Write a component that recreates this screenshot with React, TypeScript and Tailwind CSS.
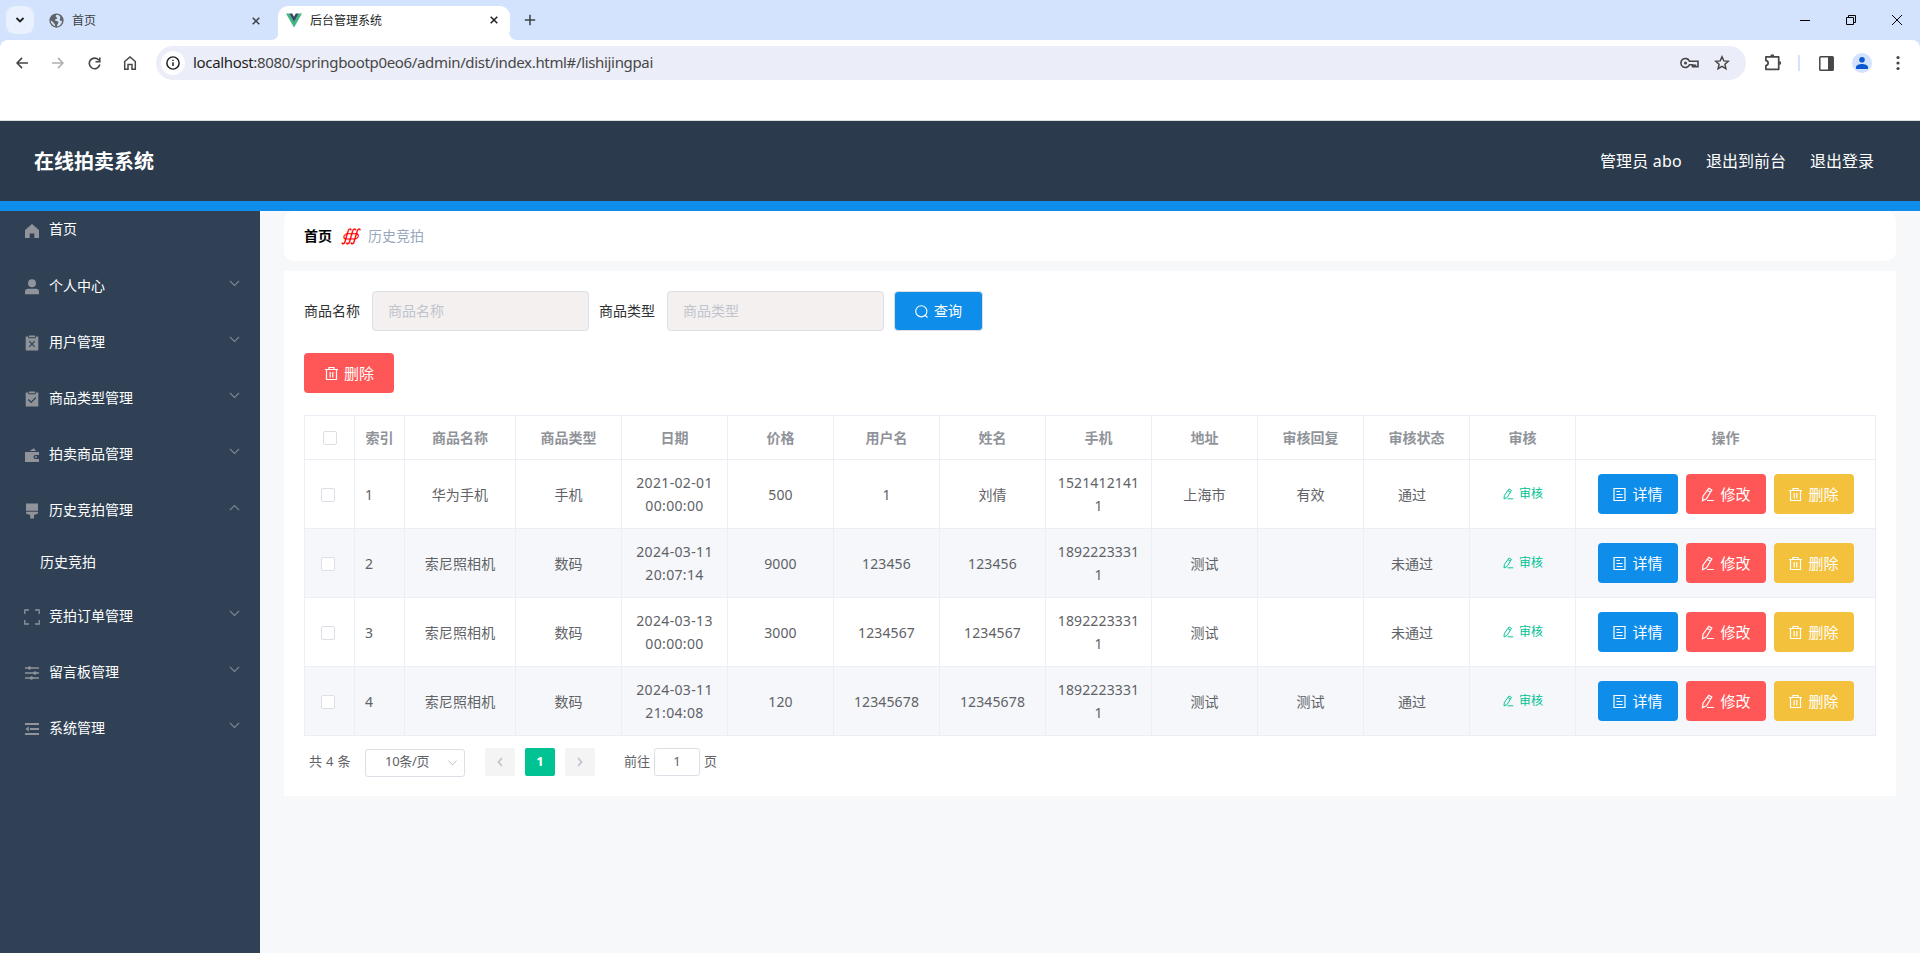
import { ReactNode } from "react";

const columns = ["商品名称", "商品类型", "日期", "价格", "用户名", "姓名", "手机", "地址", "审核回复", "审核状态", "审核"];

interface AuctionRow {
  id: number;
  cells: string[];
  status: string;
}

const rows: AuctionRow[] = [
  { id: 1, cells: ["华为手机", "手机", "2021-02-01 00:00:00", "500", "1", "刘倩", "15214121411", "上海市", "有效"], status: "通过" },
  { id: 2, cells: ["索尼照相机", "数码", "2024-03-11 20:07:14", "9000", "123456", "123456", "18922233311", "测试", ""], status: "未通过" },
  { id: 3, cells: ["索尼照相机", "数码", "2024-03-13 00:00:00", "3000", "1234567", "1234567", "18922233311", "测试", ""], status: "未通过" },
  { id: 4, cells: ["索尼照相机", "数码", "2024-03-11 21:04:08", "120", "12345678", "12345678", "18922233311", "测试", "测试"], status: "通过" },
];

function TabClose({ className }: { className: string }) {
  return (
    <svg className={`w-2 h-2 ${className}`} viewBox="0 0 8 8" stroke="currentColor" strokeWidth="1.5">
      <path d="M.7.7l6.6 6.6M7.3.7L.7 7.3" />
    </svg>
  );
}

// Tab strip
function BrowserTabs() {
  return (
    <div className="h-10 shrink-0 bg-[#d3e3fd] flex items-start text-[12px] text-[#3c4043]">
      <div className="w-7 h-7 mt-1.5 ml-1.5 rounded-[9px] bg-[#e9f0fe] flex items-center justify-center">
        <svg className="w-2.5 h-2.5" viewBox="0 0 10 10" fill="none" stroke="#202124" strokeWidth="1.8">
          <path d="M1.5 3l3.5 3.5L8.500 3" />
        </svg>
      </div>
      <div className="w-[237px] h-10 pl-[15px] pt-px flex items-center">
        <svg className="w-[15px] h-[15px] shrink-0" viewBox="0 0 16 16">
          <circle cx="8" cy="8" r="7.6" fill="#5f6368" />
          <path d="M9 1.800C7 2 6.500 3.500 8 4.500c1.500.8.5 2-1 2.200C5.500 7 6.500 8.500 8 8.500c2 0 2.500 1.800 1.500 3C8.500 12.500 8.500 14 9 14.300c3-.6 5-3.300 5-6.300-.8.8-2.500.5-2.500-.7 0-1.400 1-1.600.5-3C11.500 3 10.500 2 9 1.800zM1.800 8c.2 3 2 5.200 4.700 6 .3-1.500-.5-2-1.200-3C4.600 9.800 3.500 8.500 1.800 8z" fill="#d3e3fd" />
        </svg>
        <span className="ml-2">首页</span>
        <TabClose className="ml-auto mr-[11px]" />
      </div>
      <div className="w-2 h-2 mt-8 bg-white -mr-px">
        <div className="w-2 h-2 bg-[#d3e3fd] rounded-br-lg" />
      </div>
      <div className="w-[232px] h-[34px] mt-1.5 pl-2 pb-1.5 rounded-t-[10px] bg-white flex items-center text-[#1f1f1f]">
        <svg className="w-4 h-[15px] shrink-0" viewBox="0 0 16 15">
          <path d="M0 .5h3.200L8 8.500 12.800.5H16L8 14.500z" fill="#41b883" />
          <path d="M3.200.5h3L8 3.700 9.800.5h3L8 8.700z" fill="#34495e" />
        </svg>
        <span className="ml-2 mt-0.5">后台管理系统</span>
        <TabClose className="ml-auto mr-3" />
      </div>
      <div className="w-2 h-2 mt-8 bg-white -ml-px">
        <div className="w-2 h-2 bg-[#d3e3fd] rounded-bl-lg" />
      </div>
      <svg className="w-3 h-3 mt-[14px] ml-[7px]" viewBox="0 0 12 12" stroke="#3c4043" strokeWidth="1.5">
        <path d="M6 .8v10.400M.8 6h10.400" />
      </svg>
      <div className="ml-auto flex items-center h-10 text-black">
        <svg className="w-2.5 h-2.5 mr-9" viewBox="0 0 10 10" stroke="currentColor"><path d="M0 5.500h10" /></svg>
        <svg className="w-2.5 h-2.5 mr-9" viewBox="0 0 10 10" fill="none" stroke="currentColor"><path d="M.5 2.500h7v7h-7zM2.500 2.500v-2h7v7h-2" /></svg>
        <svg className="w-2.5 h-2.5 mr-[18px]" viewBox="0 0 10 10" stroke="currentColor"><path d="M0 0l10 10M10 0L0 10" /></svg>
      </div>
    </div>
  );
}

function AddressBar() {
  return (
    <div className="shrink-0 bg-[#d3e3fd]">
      <div className="h-[81px] bg-white rounded-t-lg border-b border-[#dcdfdc] flex items-start pt-1.5">
        <div className="w-[156px] h-[34px] flex items-center pl-4 text-[#474747]">
          <svg className="w-3 h-3" viewBox="0 0 12 12" fill="none" stroke="currentColor" strokeWidth="1.600"><path d="M12 6H1.300M6 .9L1.100 6 6 11.100" /></svg>
          <svg className="w-3 h-3 ml-6 text-[#b0b0b0]" viewBox="0 0 12 12" fill="none" stroke="currentColor" strokeWidth="1.600"><path d="M0 6h10.700M6 .9L10.900 6 6 11.100" /></svg>
          <svg className="w-[13px] h-[13px] ml-6" viewBox="0 0 13 13" fill="none" stroke="currentColor" strokeWidth="1.600"><path d="M11 3.400A5.300 5.300 0 1 0 11.800 7.500M11.800.5v4.200H7.500" /></svg>
          <svg className="w-3.5 h-3.5 ml-[22px]" viewBox="0 0 14 14" fill="none" stroke="currentColor" strokeWidth="1.500"><path d="M1.700 5.500L7 1l5.300 4.500v7.800H9V8.500H5v4.800H1.700z" /></svg>
        </div>
        <div className="w-[1590px] h-[34px] rounded-full bg-[#ebeef8] flex items-center pl-[5px] pr-4">
          <div className="w-6 h-6 rounded-full bg-white flex items-center justify-center">
            <svg className="w-3.5 h-3.5" viewBox="0 0 16 16" fill="none" stroke="#1f1f1f" strokeWidth="1.700"><circle cx="8" cy="8" r="7" /><path d="M8 7v4.500M8 4.200v1.600" /></svg>
          </div>
          <span className="ml-2 mb-px text-[15px] tracking-[-0.34px] text-[#474747]"><span className="text-[#1f1f1f]">localhost</span>:8080/springbootp0eo6/admin/dist/index.html#/lishijingpai</span>
          <svg className="w-[19px] h-3 ml-auto mr-[15px]" viewBox="0 0 19 12" fill="none" stroke="#474747" strokeWidth="1.600"><path d="M9.500 4.200A4.500 4.500 0 1 0 9.500 7.800h3v2h1.500v-1.500h1.500v1.500h2.500V4.200z" /><circle cx="5.500" cy="6" r="1.500" fill="#474747" stroke="none" /></svg>
          <svg className="w-4 h-4" viewBox="0 0 16 16" fill="none" stroke="#474747" strokeWidth="1.500"><path d="M8 1.800l1.800 4.100 4.500.4-3.400 3 1 4.400L8 11.400l-3.900 2.300 1-4.400-3.400-3 4.500-.4z" /></svg>
        </div>
        <div className="h-[34px] flex items-center text-[#474747]">
          <svg className="w-[18px] h-[18px] ml-[18px] mb-0.5" viewBox="0 0 18 18" fill="none" stroke="currentColor" strokeWidth="1.700">
            <path d="M1.900 3.800h12.800v12.500H1.900v-3.800c3-.4 3-4.500 0-4.900z" strokeLinejoin="round" />
            <path d="M6.300 3.200a2 2 0 0 1 4 0zM15.200 8a2 2 0 0 1 0 4z" fill="currentColor" stroke="none" />
          </svg>
          <div className="w-0.5 h-4 ml-4 bg-[#d3e3fd]" />
          <svg className="w-[15px] h-[15px] ml-[19px]" viewBox="0 0 15 15" fill="none" stroke="currentColor" strokeWidth="1.500">
            <rect x=".8" y=".8" width="13.400" height="13.400" rx=".8" />
            <path d="M9 1h5v13H9z" fill="currentColor" stroke="none" />
          </svg>
          <div className="w-5 h-5 ml-[18px] rounded-full bg-[#d3e3fd] flex items-center justify-center">
            <svg className="w-3 h-3" viewBox="0 0 12 12" fill="#0b57d0"><circle cx="6" cy="2.800" r="2.800" /><path d="M0 12v-1.800C0 8 3.500 7 6 7s6 1 6 3.200V12z" /></svg>
          </div>
          <svg className="w-1 h-4 ml-6" viewBox="0 0 4 16" fill="currentColor"><circle cx="2" cy="2.500" r="1.600" /><circle cx="2" cy="8" r="1.600" /><circle cx="2" cy="13.500" r="1.600" /></svg>
        </div>
      </div>
    </div>
  );
}

interface IconProps {
  children: ReactNode;
  className?: string;
}

function MenuIcon({ children, className = "" }: IconProps) {
  return (
    <svg className={`w-4 h-4 shrink-0 ${className}`} viewBox="0 0 16 16" fill="#909399">
      {children}
    </svg>
  );
}

const menus: { label: string; icon: ReactNode; child?: string }[] = [
  { label: "个人中心", icon: <><circle cx="8" cy="4.200" r="4" /><path d="M1 15.200v-2.400q0-3 3-3h8q3 0 3 3v2.400z" /></> },
  { label: "用户管理", icon: <><path d="M1.700 1.500h2.600v1.800h7.400V1.500h2.600V15.500H1.700zM5 .5h6v1.800H5z" /><path d="M5.300 6.200l5.400 5.600M10.700 6.200l-5.400 5.600" stroke="#304156" strokeWidth="1.200" /></> },
  { label: "商品类型管理", icon: <><path d="M1.700 1.500h2.600v1.800h7.400V1.500h2.600V15.500H1.700zM5 .5h6v1.800H5z" /><path d="M4.200 8.500l3 2.800 4.600-4.800" fill="none" stroke="#304156" strokeWidth="1.200" /></> },
  { label: "拍卖商品管理", icon: <><path d="M1 5h14v3h-3.500a2 2 0 0 0 0 4H15v3H1zM5.500 4L10 1.200 12 4z" /><circle cx="12" cy="10" r="1" /></> },
  { label: "历史竞拍管理", icon: <path d="M2 .5h12v7.300H2zM2 8.700h12v1.300q0 1-1 1l-3 1v3.500H6.200V12L3 11q-1 0-1-1z" />, child: "历史竞拍" },
  { label: "竞拍订单管理", icon: <path d="M.8 5V1H5M11 1h4.200v4M15.200 11v4H11M5 15H.8v-4" fill="none" stroke="#909399" strokeWidth="1.300" /> },
  { label: "留言板管理", icon: <><path d="M1 3h14M1 8h14M1 13h14" stroke="#909399" strokeWidth="1.300" /><circle cx="5.500" cy="3" r="1.700" /><circle cx="11" cy="8" r="1.700" /><circle cx="7.500" cy="13" r="1.700" /></> },
  { label: "系统管理", icon: <path d="M1 2h14v2H1zM6 7h9v2H6zM1 12h14v2H1zM1.500 8l3.300-2.400v4.800z" /> },
];

function Chevron({ open }: { open?: boolean }) {
  return (
    <svg className="w-[11px] h-[7px] ml-auto mb-[5px]" viewBox="0 0 11 7" fill="none" stroke="#7c8694" strokeWidth="1.100">
      <path d={open ? "M1 6l4.500-4.500L10 6" : "M1 1l4.500 4.500L10 1"} />
    </svg>
  );
}

function Sidebar() {
  return (
    <aside className="w-[260px] shrink-0 bg-[#304156] text-white text-sm">
      <div className="h-9 mb-[11px] pl-6 flex items-center">
        <MenuIcon className="mt-[3px]"><path d="M8 1l7 6v8h-4.700v-4.500H5.700V15H1V7z" /></MenuIcon>
        <span className="ml-[9px]">首页</span>
      </div>
      {menus.map((menu) => (
        <div key={menu.label}>
          <div className="h-14 pl-6 pr-5 flex items-center">
            <MenuIcon className="mt-px">{menu.icon}</MenuIcon>
            <span className="ml-[9px]">{menu.label}</span>
            <Chevron open={!!menu.child} />
          </div>
          {menu.child && <div className="h-[50px] pl-10 pb-0.5 flex items-center">{menu.child}</div>}
        </div>
      ))}
    </aside>
  );
}

function TrashIcon() {
  return (
    <svg className="w-[15px] h-[15px] shrink-0" viewBox="0 0 15 15" fill="none" stroke="currentColor" strokeWidth="1.200">
      <path d="M1 3.500h13M2.500 3.500v10h10v-10M5 3.500v-2h5v2M6.200 6v5.500M8.800 6v5.500" />
    </svg>
  );
}

function EditIcon({ className = "w-[15px] h-[15px]" }: { className?: string }) {
  return (
    <svg className={`shrink-0 ${className}`} viewBox="0 0 15 15" fill="none" stroke="currentColor" strokeWidth="1.200">
      <path d="M8.800 1.200l3 1.800-5.300 8.700-4 2 .5-4.500zM7.500 3.400l3 1.800M7 13.500h7" />
    </svg>
  );
}

function DocIcon() {
  return (
    <svg className="w-[15px] h-[15px] shrink-0" viewBox="0 0 15 15" fill="none" stroke="currentColor" strokeWidth="1.200">
      <path d="M2 1.500h11v12H2zM4.500 4.500h3.500M4.500 7.500h6M4.500 10.500h6" />
    </svg>
  );
}

function Checkbox() {
  return <span className="block w-3.5 h-3.5 rounded-[2px] border border-[#dcdfe6] bg-white" />;
}

function AuctionTable() {
  return (
    <table className="w-[1572px] table-fixed border-separate border-spacing-0 border-l border-t border-[#ebeef5] text-sm leading-[23px] text-[#606266] text-center">
      <colgroup>
        <col className="w-[50px]" />
        <col className="w-[50px]" />
        <col className="w-[111px]" />
        {columns.slice(1).map((name) => (
          <col key={name} className="w-[106px]" />
        ))}
        <col className="w-[300px]" />
      </colgroup>
      <thead>
        <tr className="h-11 text-[#909399]">
          <th className="border-r border-b border-[#ebeef5] pl-[18px]"><Checkbox /></th>
          <th className="border-r border-b border-[#ebeef5]">索引</th>
          {columns.map((name) => (
            <th key={name} className="border-r border-b border-[#ebeef5]">{name}</th>
          ))}
          <th className="border-r border-b border-[#ebeef5]">操作</th>
        </tr>
      </thead>
      <tbody>
        {rows.map((row) => (
          <tr key={row.id} className="h-[69px] even:bg-[#f5f7fa]">
            <td className="border-r border-b border-[#ebeef5] pl-4 pt-0.5"><Checkbox /></td>
            <td className="border-r border-b border-[#ebeef5] pl-2.5 text-left">{row.id}</td>
            {row.cells.map((cell, index) => (
              <td
                key={index}
                className={`border-r border-b border-[#ebeef5] px-2.5 break-words ${index === 2 ? "tracking-[0.35px]" : "tracking-[0.12px]"}`}
              >
                {cell}
              </td>
            ))}
            <td className="border-r border-b border-[#ebeef5] pl-2.5 pr-[19px]">{row.status}</td>
            <td className="border-r border-b border-[#ebeef5]">
              <button className="flex items-center mx-auto text-xs text-[#00c292]">
                <EditIcon className="w-3 h-3" />
                <span className="ml-[5px]">审核</span>
              </button>
            </td>
            <td className="border-r border-b border-[#ebeef5]">
              <div className="flex justify-center gap-2 text-[15px] text-white">
                <button className="w-20 h-10 rounded bg-[#0f8deb] flex items-center justify-center gap-[5px]"><DocIcon />详情</button>
                <button className="w-20 h-10 rounded bg-[#ff5757] flex items-center justify-center gap-[5px]"><EditIcon />修改</button>
                <button className="w-20 h-10 rounded bg-[#f4c13c] flex items-center justify-center gap-[5px]"><TrashIcon />删除</button>
              </div>
            </td>
          </tr>
        ))}
      </tbody>
    </table>
  );
}

function Pagination() {
  return (
    <div className="flex items-center mt-3 pl-[5px] h-7 text-[13px] text-[#606266]">
      <span className="w-[42px] whitespace-nowrap tracking-[0.3px]">共 4 条</span>
      <div className="w-[100px] h-7 ml-[14px] mt-0.5 border border-[#dcdfe6] rounded-[3px] flex items-center pl-[19px] pr-[7px]">
        <span className="mb-0.5 tracking-[-0.3px]">10条/页</span>
        <svg className="w-[9px] h-[6px] ml-auto" viewBox="0 0 9 6" fill="none" stroke="#c0c4cc"><path d="M.5.5l4 4.500 4-4.500" /></svg>
      </div>
      <div className="w-[30px] h-7 ml-5 rounded-[2px] bg-[#f4f4f5] flex items-center justify-center">
        <svg className="w-1.5 h-2.5" viewBox="0 0 6 10" fill="none" stroke="#c0c4cc" strokeWidth="1.800"><path d="M5 1L1.500 5 5 9" /></svg>
      </div>
      <div className="w-[30px] h-7 ml-2.5 rounded-[2px] bg-[#00c292] text-white font-bold flex items-center justify-center">1</div>
      <div className="w-[30px] h-7 ml-2.5 rounded-[2px] bg-[#f4f4f5] flex items-center justify-center">
        <svg className="w-1.5 h-2.5" viewBox="0 0 6 10" fill="none" stroke="#c0c4cc" strokeWidth="1.800"><path d="M1 1l3.500 4L1 9" /></svg>
      </div>
      <span className="ml-[29px]">前往</span>
      <div className="w-[46px] h-7 ml-1 mr-1 border border-[#dcdfe6] rounded-[3px] flex items-center justify-center">1</div>
      <span>页</span>
    </div>
  );
}

export default function App() {
  return (
    <div className="w-[1920px] h-[953px] overflow-hidden flex flex-col bg-[#f6f8fa] font-['Noto_Sans','Noto_Sans_CJK_SC',sans-serif]">
      <BrowserTabs />
      <AddressBar />

      <header className="h-[90px] shrink-0 bg-[#2b3b4d] border-b-10 border-[#0f8deb] text-white flex items-center pl-[34px] pr-[46px]">
        <h1 className="mt-0.5 text-xl font-bold">在线拍卖系统</h1>
        <div className="ml-auto flex gap-6 text-base">
          <span className="tracking-[0.2px]">管理员 abo</span>
          <span>退出到前台</span>
          <span>退出登录</span>
        </div>
      </header>

      <div className="flex flex-1">
        <Sidebar />
        <main className="flex-1 px-6">
          <div className="h-[50px] rounded-[10px] bg-white flex items-center px-5 text-sm">
            <span className="font-bold text-black">首页</span>
            <span className="w-[18px] mx-[9px] pb-0.5 flex justify-center font-['DejaVu_Serif',serif] italic text-[17px] leading-none text-[#ff0000]">∰</span>
            <span className="text-[#97a8be]">历史竞拍</span>
          </div>

          <div className="h-[525px] mt-2.5 p-5 bg-white">
            <div className="flex items-center text-sm text-[#303133]">
              <span>商品名称</span>
              <div className="w-[217px] h-10 ml-3 mr-2.5 pl-[15px] rounded border border-[#dcdfe6] bg-[#f4f0f0] text-[#c0c4cc] flex items-center">商品名称</div>
              <span>商品类型</span>
              <div className="w-[217px] h-10 ml-3 mr-2.5 pl-[15px] rounded border border-[#dcdfe6] bg-[#f4f0f0] text-[#c0c4cc] flex items-center">商品类型</div>
              <button className="w-[89px] h-10 rounded border border-[#dcdfe6] bg-[#0f8deb] text-white flex items-center justify-center gap-1.5">
                <svg className="w-[13px] h-[13px]" viewBox="0 0 13 13" fill="none" stroke="currentColor" strokeWidth="1.100"><circle cx="6.300" cy="6.300" r="5.600" /><path d="M10.300 10.300l2.200 2.200" /></svg>
                查询
              </button>
            </div>
            <button className="w-[90px] h-10 mt-[22px] mb-[22px] rounded bg-[#ff5757] text-white text-[15px] flex items-center justify-center gap-[5px]">
              <TrashIcon />
              删除
            </button>
            <AuctionTable />
            <Pagination />
          </div>
        </main>
      </div>
    </div>
  );
}
